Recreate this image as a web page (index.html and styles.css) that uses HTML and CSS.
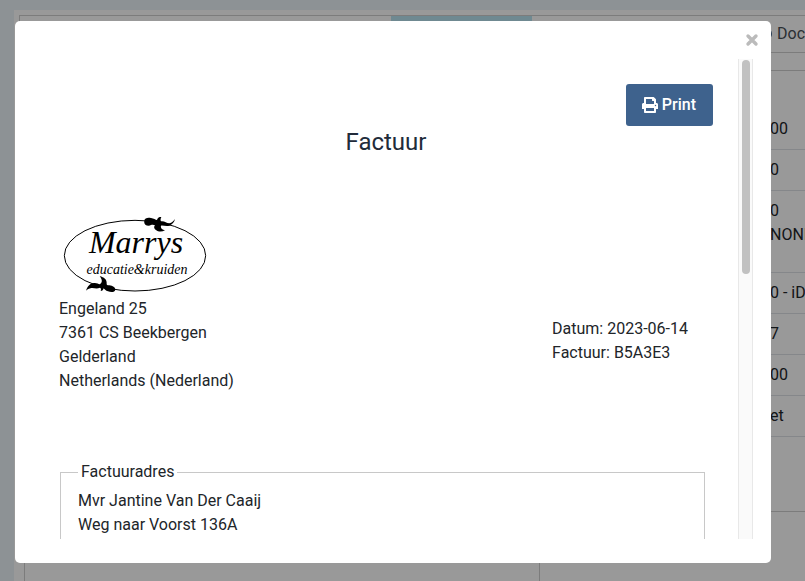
FILE: index.html
```html
<!DOCTYPE html>
<html lang="nl">

<head>
    <meta charset="UTF-8">
    <meta name="viewport" content="width=device-width, initial-scale=1.0">
    <title>Factuur</title>
    <link rel="stylesheet" href="styles.css">
</head>

<body>
    <main class="page">
        <div class="panel">
            <div class="tabs">
                <div class="tab"></div>
                <div class="tab active"></div>
                <div class="tab last"><span class="dot"></span>Doc</div>
            </div>
            <div class="columns">
                <div class="column"></div>
                <div class="column">
                    <ul class="values">
                        <li>00</li>
                        <li>0</li>
                        <li class="tall">0<br>NONE</li>
                        <li>0 - iD</li>
                        <li>7</li>
                        <li>00</li>
                        <li>et</li>
                    </ul>
                </div>
            </div>
        </div>
    </main>

    <div class="overlay">
        <div class="modal" role="dialog" aria-labelledby="invoiceTitle">
            <div class="modal-header">
                <button type="button" class="close" aria-label="Sluiten">
                    <svg viewBox="0 0 14 14" width="14" height="14">
                        <path d="M3 3l8 8M11 3l-8 8" />
                    </svg>
                </button>
            </div>

            <div class="modal-body">
                <div class="invoice">
                    <button type="button" class="print">
                        <svg viewBox="0 0 512 512" width="16" height="16">
                            <path d="M464 192h-16V81.941a24 24 0 0 0-7.029-16.97L383.029 7.029A24 24 0 0 0 366.059 0H88C74.745 0 64 10.745 64 24v168H48c-26.51 0-48 21.49-48 48v132c0 6.627 5.373 12 12 12h52v104c0 13.255 10.745 24 24 24h336c13.255 0 24-10.745 24-24V384h52c6.627 0 12-5.373 12-12V240c0-26.51-21.49-48-48-48zm-80 256H128v-96h256v96zM384 224H128V64h192v48c0 8.837 7.163 16 16 16h48v96zm48 72c-13.255 0-24-10.745-24-24s10.745-24 24-24 24 10.745 24 24-10.745 24-24 24z" />
                        </svg>
                        Print
                    </button>
                    <h1 id="invoiceTitle">Factuur</h1>

                    <div class="details">
                        <div class="sender">
                            <svg class="logo" viewBox="27 51 450 240" width="150" height="80">
                                <ellipse cx="255" cy="167" rx="212" ry="106" />
                                <path d="M283 62C284 54 293 52 303 54C311 56 317 59 321 60C323 53 328 50 334 51C331 57 331 61 333 64C343 62 349 70 358 70C366 69 370 63 375 57C373 66 367 74 358 77C349 79 339 76 333 77C331 84 336 88 345 91C336 96 325 96 318 90C313 86 310 81 315 76C307 72 304 76 296 77C286 77 281 71 283 62Z" />
                                <path d="M108 272C113 258 120 250 132 249C140 248 145 252 149 253C160 247 155 236 149 228C162 232 171 238 170 250C169 255 172 256 178 256C188 257 196 262 196 269C195 277 183 277 174 274C167 272 163 268 161 265C160 270 157 273 152 273C154 268 153 265 150 263C139 268 133 263 124 264C117 265 112 269 108 272Z" />
                                <text class="logo-name" x="258" y="158">Marrys</text>
                                <text class="logo-sub" x="261" y="221">educatie&amp;kruiden</text>
                            </svg>
                            <address>
                                Engeland 25<br>
                                7361 CS Beekbergen<br>
                                Gelderland<br>
                                Netherlands (Nederland)
                            </address>
                        </div>
                        <div class="meta">
                            Datum: 2023-06-14<br>
                            Factuur: B5A3E3
                        </div>
                    </div>

                    <fieldset>
                        <legend>Factuuradres</legend>
                        Mvr Jantine Van Der Caaij<br>
                        Weg naar Voorst 136A
                    </fieldset>
                </div>
                <div class="scrollbar">
                    <div class="thumb"></div>
                </div>
            </div>
        </div>
    </div>
</body>

</html>
```
FILE: styles.css
```css
* {
    box-sizing: border-box;
}

body {
    margin: 0;
    font-family: Roboto, Arial, sans-serif;
    font-size: 16px;
    line-height: 24px;
    color: #212529;
    background-color: #ecf4f8;
}

.page {
    display: flex;
    height: 100vh;
    padding: 10px 0 0 14px;
    overflow: hidden;
}

.panel {
    display: flex;
    flex-direction: column;
    flex: 1;
    padding: 5px 0 0 5px;
    background-color: #fff;
}

.tabs {
    display: grid;
    grid-template-columns: 371px 141px 1fr;
    height: 38px;
    border: 1px solid #cfcfcf;
    border-right: none;
}

.tab.active {
    background-color: #b9e4f2;
}

.tab.last {
    display: flex;
    align-items: center;
    gap: 5px;
    padding-left: 228px;
    color: #495057;
    overflow: hidden;
}

.dot {
    width: 12px;
    height: 12px;
    border-radius: 6px;
    background-color: #3e628d;
}

.columns {
    display: grid;
    grid-template-columns: 515px 1fr;
    flex: 1;
    margin: 17px 0 0 5px;
}

.column {
    border-top: 1px solid #cfcfcf;
    border-left: 1px solid #cfcfcf;
}

.values {
    height: 441px;
    margin: 0;
    padding: 38px 0 0;
    list-style: none;
    border-bottom: 1px solid #cfcfcf;
}

.values li {
    height: 41px;
    padding: 8px 0 0 230px;
    border-bottom: 1px solid #dee2e6;
    white-space: nowrap;
}

.values .tall {
    height: 82px;
}

.overlay {
    position: fixed;
    inset: 0;
    display: flex;
    padding: 21px 34px 18px 15px;
    background-color: rgba(0, 0, 0, 0.4);
}

.modal {
    display: flex;
    flex-direction: column;
    flex: 1;
    padding-bottom: 24px;
    background-color: #fff;
    border-radius: 5px;
}

.modal-header {
    display: flex;
    justify-content: flex-end;
    align-items: center;
    height: 38px;
    padding-right: 12px;
}

.close {
    padding: 0;
    border: none;
    background: none;
    cursor: pointer;
}

.close svg {
    display: block;
    fill: none;
    stroke: #bbb;
    stroke-width: 3.4;
    stroke-linecap: round;
}

.modal-body {
    display: flex;
    flex: 1;
    min-height: 0;
    margin-right: 18px;
}

.invoice {
    flex: 1;
    padding: 25px 25px 0 44px;
    overflow: hidden;
}

.print {
    display: flex;
    align-items: center;
    gap: 4px;
    height: 42px;
    margin-left: auto;
    padding: 0 17px 0 16px;
    border: none;
    border-radius: 3px;
    background-color: #3e628d;
    color: #fff;
    font: inherit;
    font-weight: 500;
    cursor: pointer;
}

.print svg {
    fill: #fff;
}

h1 {
    margin: 0;
    color: #212b3a;
    font-size: 24px;
    font-weight: 400;
    line-height: 32px;
    text-align: center;
}

.details {
    display: flex;
    justify-content: space-between;
    align-items: flex-end;
    padding: 59px 25px 0 0;
}

.logo {
    display: block;
}

.logo ellipse {
    fill: none;
    stroke: #000;
    stroke-width: 3;
}

.logo text {
    font-family: "Liberation Serif", serif;
    font-style: italic;
    text-anchor: middle;
}

.logo-name {
    font-size: 96px;
}

.logo-sub {
    font-size: 42px;
}

address {
    font-style: normal;
}

.meta {
    margin-bottom: 28px;
}

fieldset {
    height: 200px;
    margin: 67px 8px 0 1px;
    padding: 5px 17px;
    border: 1px solid #c8c8c8;
}

legend {
    padding: 0 3px;
}

.scrollbar {
    width: 15px;
    padding: 1px 2px 0 3px;
    border: 1px solid #e8e8e8;
    border-width: 0 1px;
    background-color: #fafafa;
}

.thumb {
    width: 8px;
    height: 44.6%;
    border-radius: 4px;
    background-color: #c1c1c1;
}
```
